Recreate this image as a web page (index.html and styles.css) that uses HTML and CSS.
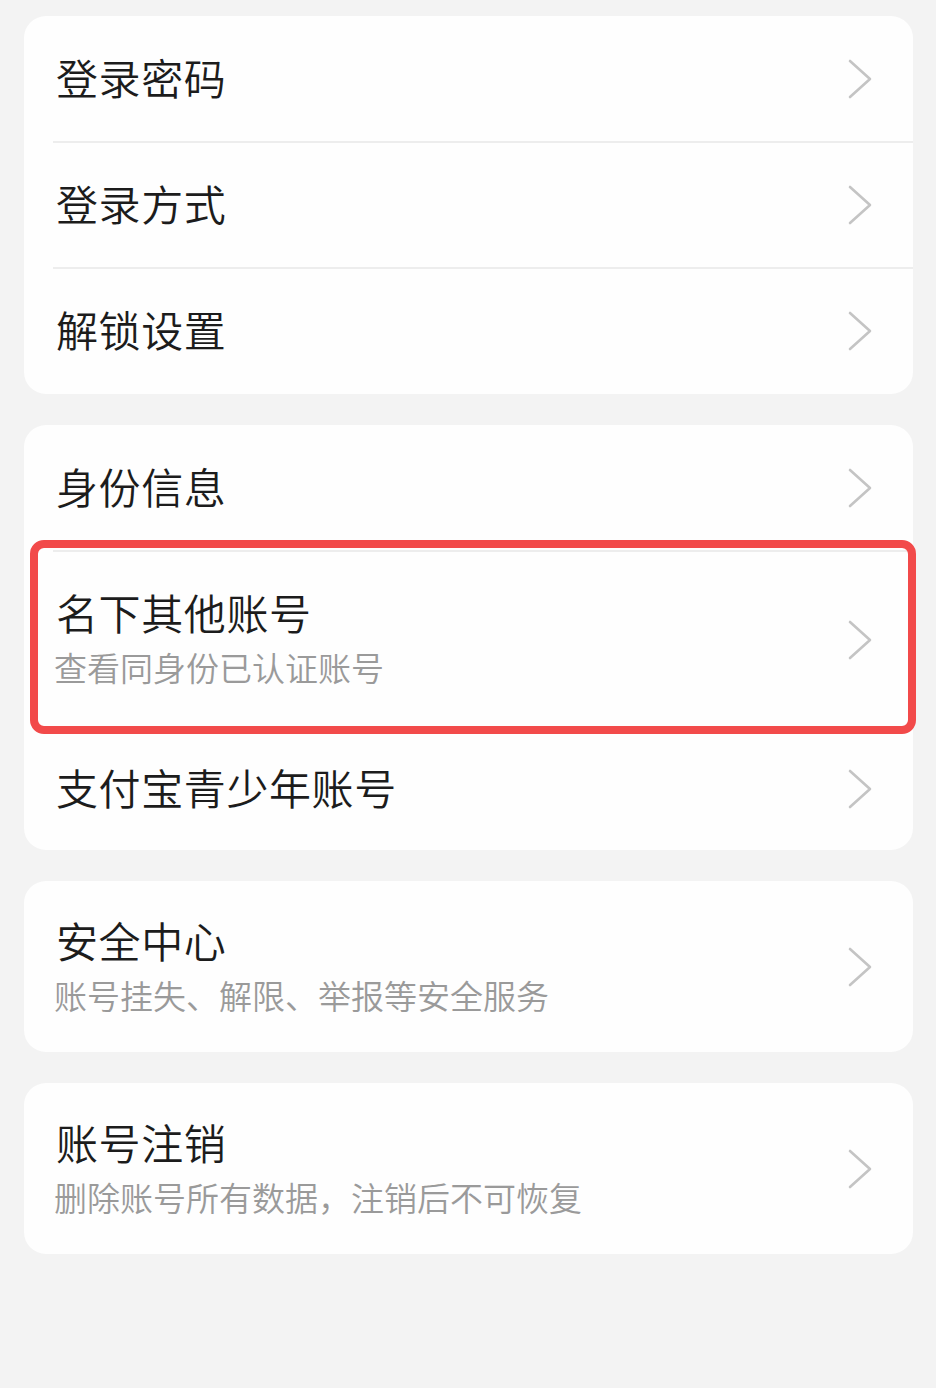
FILE: index.html
```html
<!DOCTYPE html>
<html lang="zh-CN">
<head>
<meta charset="utf-8">
<title>账号与安全</title>
<link rel="stylesheet" href="styles.css">
</head>
<body>
<div class="page">
  <section class="card">
    <div class="row">
      <div class="text"><div class="title">登录密码</div></div>
      <svg class="chev" viewBox="0 0 24 40"><path d="M2 2 L22 20 L2 38"/></svg>
    </div>
    <div class="row divided">
      <div class="text"><div class="title">登录方式</div></div>
      <svg class="chev" viewBox="0 0 24 40"><path d="M2 2 L22 20 L2 38"/></svg>
    </div>
    <div class="row divided">
      <div class="text"><div class="title">解锁设置</div></div>
      <svg class="chev" viewBox="0 0 24 40"><path d="M2 2 L22 20 L2 38"/></svg>
    </div>
  </section>

  <section class="card">
    <div class="row">
      <div class="text"><div class="title">身份信息</div></div>
      <svg class="chev" viewBox="0 0 24 40"><path d="M2 2 L22 20 L2 38"/></svg>
    </div>
    <div class="row divided tall highlighted">
      <div class="text">
        <div class="title">名下其他账号</div>
        <div class="sub">查看同身份已认证账号</div>
      </div>
      <svg class="chev" viewBox="0 0 24 40"><path d="M2 2 L22 20 L2 38"/></svg>
      <div class="mark"></div>
    </div>
    <div class="row short">
      <div class="text"><div class="title">支付宝青少年账号</div></div>
      <svg class="chev" viewBox="0 0 24 40"><path d="M2 2 L22 20 L2 38"/></svg>
    </div>
  </section>

  <section class="card">
    <div class="row two">
      <div class="text">
        <div class="title">安全中心</div>
        <div class="sub">账号挂失、解限、举报等安全服务</div>
      </div>
      <svg class="chev" viewBox="0 0 24 40"><path d="M2 2 L22 20 L2 38"/></svg>
    </div>
  </section>

  <section class="card">
    <div class="row two">
      <div class="text">
        <div class="title">账号注销</div>
        <div class="sub">删除账号所有数据，注销后不可恢复</div>
      </div>
      <svg class="chev" viewBox="0 0 24 40"><path d="M2 2 L22 20 L2 38"/></svg>
    </div>
  </section>
</div>
</body>
</html>
```

FILE: styles.css
```css
html, body {
  margin: 0;
  padding: 0;
  background: #f3f3f3;
}
body {
  width: 936px;
  height: 1388px;
  overflow: hidden;
  font-family: "Noto Sans CJK SC", "Noto Sans", sans-serif;
  font-weight: 350;
}
.page {
  display: flex;
  flex-direction: column;
  gap: 31px;
  padding: 16px 23px 0 24px;
}
.card {
  background: #fefefe;
  border-radius: 22px;
  display: flex;
  flex-direction: column;
}
.row {
  position: relative;
  display: flex;
  align-items: center;
  height: 126px;
  padding: 0 41px 0 32px;
  box-sizing: border-box;
}
.row.divided::before {
  content: "";
  position: absolute;
  left: 29px;
  right: 0;
  top: -1px;
  height: 2px;
  background: #ededed;
}
.row.tall { height: 177px; }
.row.short { height: 122px; }
.row.two { height: 171px; }
.text {
  flex: 1;
  display: flex;
  flex-direction: column;
  gap: 10px;
  margin-top: -4px;
}
.title {
  font-size: 42px;
  line-height: 50px;
  color: #1c1c1c;
  letter-spacing: 0.6px;
}
.sub {
  font-size: 33px;
  line-height: 40px;
  color: #9a9a9a;
  margin-left: -2px;
}
.row.tall .text { margin-top: -6px; }
.chev {
  width: 24px;
  height: 40px;
  fill: none;
  stroke: #c4c4c4;
  stroke-width: 2.6;
  stroke-linecap: round;
  stroke-linejoin: round;
}
.mark {
  position: absolute;
  left: 6px;
  right: -3px;
  top: -11px;
  bottom: -6px;
  border: 8px solid #f24a4a;
  border-radius: 14px;
  pointer-events: none;
}
```
